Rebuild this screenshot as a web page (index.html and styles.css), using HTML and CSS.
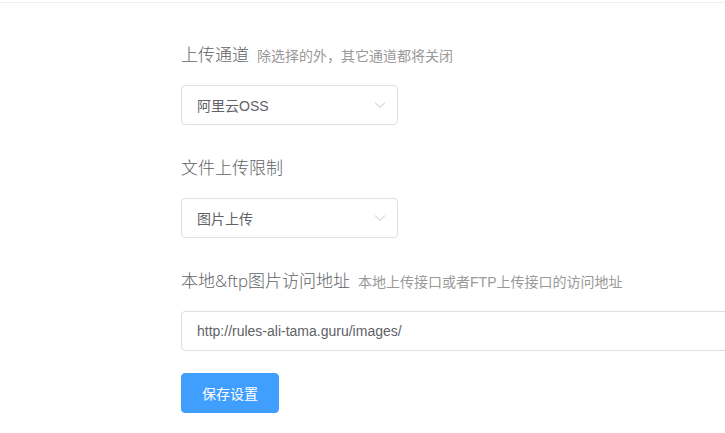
FILE: index.html
```html
<!DOCTYPE html>
<html lang="zh-CN">
<head>
    <meta charset="UTF-8">
    <meta name="viewport" content="width=device-width, initial-scale=1.0">
    <title>上传设置</title>
    <link rel="stylesheet" href="styles.css">
</head>
<body>

    <div class="top-bar"></div>

    <div class="settings">
        <!-- 上传通道 -->
        <div class="form-item">
            <div class="form-label">
                <span class="label-text">上传通道</span>
                <span class="label-tip">除选择的外，其它通道都将关闭</span>
            </div>
            <div class="select">
                <span class="select-value">阿里云OSS</span>
                <svg class="select-arrow" width="12" height="12" viewBox="0 0 12 12">
                    <path d="M1 3.5 L6 8.5 L11 3.5" fill="none" stroke="#c0c4cc" stroke-width="1"/>
                </svg>
            </div>
        </div>

        <!-- 文件上传限制 -->
        <div class="form-item">
            <div class="form-label">
                <span class="label-text">文件上传限制</span>
            </div>
            <div class="select">
                <span class="select-value">图片上传</span>
                <svg class="select-arrow" width="12" height="12" viewBox="0 0 12 12">
                    <path d="M1 3.5 L6 8.5 L11 3.5" fill="none" stroke="#c0c4cc" stroke-width="1"/>
                </svg>
            </div>
        </div>

        <!-- 访问地址 -->
        <div class="form-item">
            <div class="form-label">
                <span class="label-text">本地&amp;ftp图片访问地址</span>
                <span class="label-tip">本地上传接口或者FTP上传接口的访问地址</span>
            </div>
            <input class="text-input" type="text" value="http://rules-ali-tama.guru/images/">
        </div>

        <button class="save-button">保存设置</button>
    </div>

</body>
</html>
```

FILE: styles.css
```css
/* General */
body {
    margin: 0;
    background-color: #ffffff;
    font-family: 'Liberation Sans', 'Noto Sans CJK SC', sans-serif;
    color: #606266;
    overflow: hidden;
}

.top-bar {
    height: 2px;
    border-bottom: 1px solid #eeeeee;
}

.settings {
    padding: 40px 0 0 181px;
}

/* Form items */
.form-item {
    margin-bottom: 31px;
}

.form-item:last-of-type {
    margin-bottom: 22px;
}

.form-label {
    display: flex;
    align-items: baseline;
    gap: 8px;
    height: 24px;
    line-height: 24px;
    margin-bottom: 18px;
}

.label-text {
    font-family: 'Open Sans', 'Noto Sans CJK SC', sans-serif;
    font-size: 17px;
    font-weight: 300;
    color: #606266;
}

.label-tip {
    font-size: 14px;
    color: #999999;
}

/* Select */
.select {
    box-sizing: border-box;
    display: flex;
    align-items: center;
    justify-content: space-between;
    width: 217px;
    height: 40px;
    padding: 0 11px 0 15px;
    border: 1px solid #dcdfe6;
    border-radius: 4px;
    font-size: 14px;
}

.select-value {
    color: #606266;
}

.select-arrow {
    display: block;
}

/* Text input */
.text-input {
    box-sizing: border-box;
    display: block;
    width: 620px;
    height: 40px;
    padding: 0 15px;
    border: 1px solid #dcdfe6;
    border-radius: 4px;
    font-family: 'Liberation Sans', 'Noto Sans CJK SC', sans-serif;
    font-size: 14px;
    color: #606266;
    outline: none;
}

/* Button */
.save-button {
    box-sizing: border-box;
    width: 98px;
    height: 40px;
    padding: 0 20px;
    border: 1px solid #409eff;
    border-radius: 4px;
    background-color: #409eff;
    color: #ffffff;
    font-family: 'Liberation Sans', 'Noto Sans CJK SC', sans-serif;
    font-size: 14px;
    cursor: pointer;
}
```
